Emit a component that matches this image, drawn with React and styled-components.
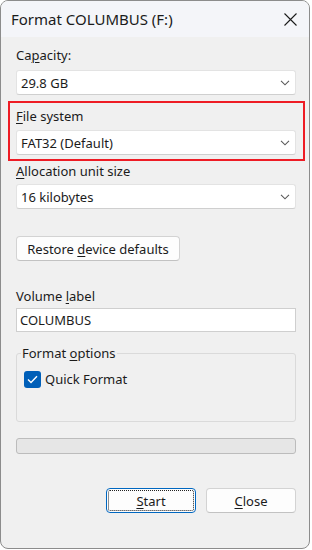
import React from 'react';
import styled, { createGlobalStyle } from 'styled-components';

const Global = createGlobalStyle`
  html, body {
    margin: 0;
    padding: 0;
    background: #ffffff;
  }
  body {
    font-family: 'Noto Sans', 'Open Sans', sans-serif;
    font-size: 13px;
    color: #1b1b1b;
  }
`;

const Window = styled.div`
  width: 310px;
  height: 549px;
  box-sizing: border-box;
  border: 1px solid #8c8c8c;
  border-radius: 8px;
  background: #f0f0f0;
  overflow: hidden;
  display: flex;
  flex-direction: column;
`;

const TitleBar = styled.div`
  height: 36px;
  flex: none;
  display: flex;
  align-items: center;
  justify-content: space-between;
  padding: 0 12px 0 10px;
  background: #f4f5f9;
  font-size: 15px;
`;

const CloseGlyph = styled.svg`
  width: 13px;
  height: 13px;
  display: block;
  margin-top: 1px;
`;

const Body = styled.div`
  display: flex;
  flex-direction: column;
  padding: 0 13px 0 15px;
`;

const Label = styled.div`
  height: 18px;
  line-height: 18px;
  margin-top: ${p => p.$top || 0}px;
  white-space: nowrap;
`;

const Key = styled.span`
  text-decoration: underline;
  text-underline-offset: 2px;
  text-decoration-thickness: 1px;
`;

const Select = styled.div`
  width: 280px;
  height: 25px;
  box-sizing: border-box;
  margin-top: ${p => p.$top || 0}px;
  display: flex;
  align-items: center;
  justify-content: space-between;
  padding: 0 5px 0 4px;
  background: #ffffff;
  border: 1px solid #e3e3e3;
  border-bottom-color: #cfcfcf;
  border-radius: 3px;
`;

const Chevron = styled.svg`
  width: 10px;
  height: 6px;
  display: block;
`;

const Highlight = styled.div`
  width: 297px;
  box-sizing: border-box;
  margin: 6px 0 0 -8px;
  padding: 2px 0 4px 6px;
  border: 2px solid #ee1c25;
  display: flex;
  flex-direction: column;
`;

const Button = styled.button`
  width: ${p => p.$w}px;
  height: 25px;
  box-sizing: border-box;
  margin-top: ${p => p.$top || 0}px;
  padding: 0;
  font: inherit;
  color: inherit;
  background: #fdfdfd;
  border: 1px solid #d3d3d3;
  border-bottom-color: #c2c2c2;
  border-radius: 4px;
  text-align: center;
  line-height: 22px;
  ${p => p.$focus && `
    border: 1px solid #0067c0;
    outline: 1px dotted #222;
    outline-offset: -3px;
  `}
`;

const TextInput = styled.div`
  width: 280px;
  height: 24px;
  box-sizing: border-box;
  margin-top: 3px;
  padding: 0 3px;
  line-height: 22px;
  background: #ffffff;
  border: 1px solid #cfcfcf;
`;

const Group = styled.fieldset`
  width: 280px;
  height: 78px;
  box-sizing: border-box;
  margin: 12px 0 0;
  padding: 0 4px;
  border: 1px solid #dadada;
  border-radius: 3px;
`;

const Legend = styled.legend`
  padding: 0 1px;
  line-height: 18px;
`;

const CheckRow = styled.div`
  display: flex;
  align-items: center;
  gap: 4px;
  margin: 8px 0 0 3px;
`;

const Box = styled.span`
  width: 17px;
  height: 17px;
  border-radius: 3px;
  background: #005fb8;
  display: flex;
  align-items: center;
  justify-content: center;
`;

const Progress = styled.div`
  width: 280px;
  height: 16px;
  box-sizing: border-box;
  margin-top: 16px;
  background: #e6e6e6;
  border: 1px solid #bcbcbc;
  border-radius: 3px;
`;

const Actions = styled.div`
  display: flex;
  justify-content: flex-end;
  gap: 10px;
  width: 280px;
  margin-top: 34px;
`;

const Dropdown = ({ value, top }) => (
  <Select $top={top}>
    <span>{value}</span>
    <Chevron viewBox="0 0 10 6">
      <path d="M1 0.8l4 4 4-4" fill="none" stroke="#5a5a5a" strokeWidth="1.1" />
    </Chevron>
  </Select>
);

export default function App() {
  return (
    <>
      <Global />
      <Window>
        <TitleBar>
          <span>Format COLUMBUS (F:)</span>
          <CloseGlyph viewBox="0 0 13 13">
            <path d="M0.5 0.5l12 12M12.5 0.5l-12 12" stroke="#1b1b1b" strokeWidth="1.1" />
          </CloseGlyph>
        </TitleBar>
        <Body>
          <Label $top={9}>Ca<Key>p</Key>acity:</Label>
          <Dropdown value="29.8 GB" top={6} />

          <Highlight>
            <Label $top={2}><Key>F</Key>ile system</Label>
            <Dropdown value="FAT32 (Default)" top={5} />
          </Highlight>

          <Label $top={1}><Key>A</Key>llocation unit size</Label>
          <Dropdown value="16 kilobytes" top={4} />

          <Button $w={164} $top={27}>Restore <Key>d</Key>evice defaults</Button>

          <Label $top={26}>Volume <Key>l</Key>abel</Label>
          <TextInput>COLUMBUS</TextInput>

          <Group>
            <Legend>Format <Key>o</Key>ptions</Legend>
            <CheckRow>
              <Box>
                <svg width="11" height="9" viewBox="0 0 11 9">
                  <path d="M1 4.6l3 3 6-6.4" fill="none" stroke="#ffffff" strokeWidth="1.4" />
                </svg>
              </Box>
              <span>Quick Format</span>
            </CheckRow>
          </Group>

          <Progress />

          <Actions>
            <Button $w={90} $focus><Key>S</Key>tart</Button>
            <Button $w={90}><Key>C</Key>lose</Button>
          </Actions>
        </Body>
      </Window>
    </>
  );
}
